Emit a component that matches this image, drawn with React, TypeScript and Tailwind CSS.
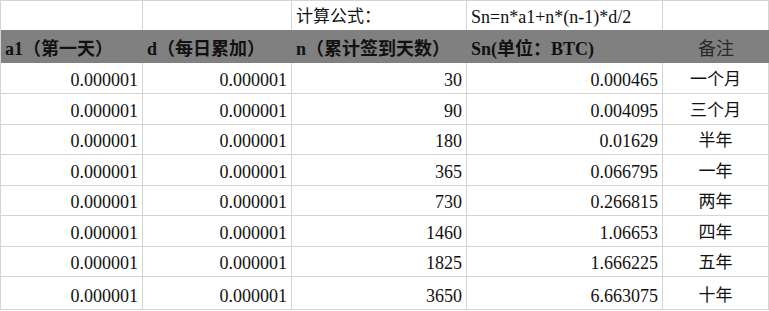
const rows = [
  { n: '30', sn: '0.000465', note: '一个月', h: 'h-[31px]' },
  { n: '90', sn: '0.004095', note: '三个月', h: 'h-[31px]' },
  { n: '180', sn: '0.01629', note: '半年', h: 'h-[30px]' },
  { n: '365', sn: '0.066795', note: '一年', h: 'h-[31px]' },
  { n: '730', sn: '0.266815', note: '两年', h: 'h-[30px]' },
  { n: '1460', sn: '1.06653', note: '四年', h: 'h-[31px]' },
  { n: '1825', sn: '1.666225', note: '五年', h: 'h-[30px]' },
  { n: '3650', sn: '6.663075', note: '十年', h: 'h-[33px]' },
];

const cols = 'grid grid-cols-[142px_149px_175px_196px_106px]';
const cell = 'flex items-end border-r border-[#d4d4d4] px-[4px] pb-[4px] leading-[18px]';

export default function App() {
  return (
    <div
      className="h-[311px] w-[769px] overflow-hidden bg-white text-[18px] text-[#111]"
      style={{ fontFamily: '"Liberation Serif", "Noto Sans CJK SC", serif' }}
    >
      <div className="border-l border-[#d4d4d4]">
        <div className={`${cols} h-[30px] border-t border-[#d4d4d4]`}>
          <div className={cell} />
          <div className={cell} />
          <div className={`${cell} text-[17px]`}>计算公式：</div>
          <div className={cell}>Sn=n*a1+n*(n-1)*d/2</div>
          <div className={cell} />
        </div>

        <div className={`${cols} h-[33px] bg-[#808080] font-bold`}>
          <div className="flex items-end px-[4px] pb-[5px] leading-[18px]">a1（第一天）</div>
          <div className="flex items-end px-[4px] pb-[5px] leading-[18px]">d（每日累加）</div>
          <div className="flex items-end px-[4px] pb-[5px] leading-[18px]">n（累计签到天数）</div>
          <div className="flex items-end px-[4px] pb-[5px] leading-[18px]">Sn(单位：BTC)</div>
          <div className="flex items-end justify-center pb-[5px] font-normal leading-[18px] text-[#2a2a2a]">备注</div>
        </div>

        {rows.map((r) => (
          <div key={r.n} className={`${cols} ${r.h} border-b border-[#d4d4d4]`}>
            <div className={`${cell} justify-end`}>0.000001</div>
            <div className={`${cell} justify-end`}>0.000001</div>
            <div className={`${cell} justify-end`}>{r.n}</div>
            <div className={`${cell} justify-end`}>{r.sn}</div>
            <div className={`${cell} justify-center text-[17px]`}>{r.note}</div>
          </div>
        ))}
      </div>
    </div>
  );
}
